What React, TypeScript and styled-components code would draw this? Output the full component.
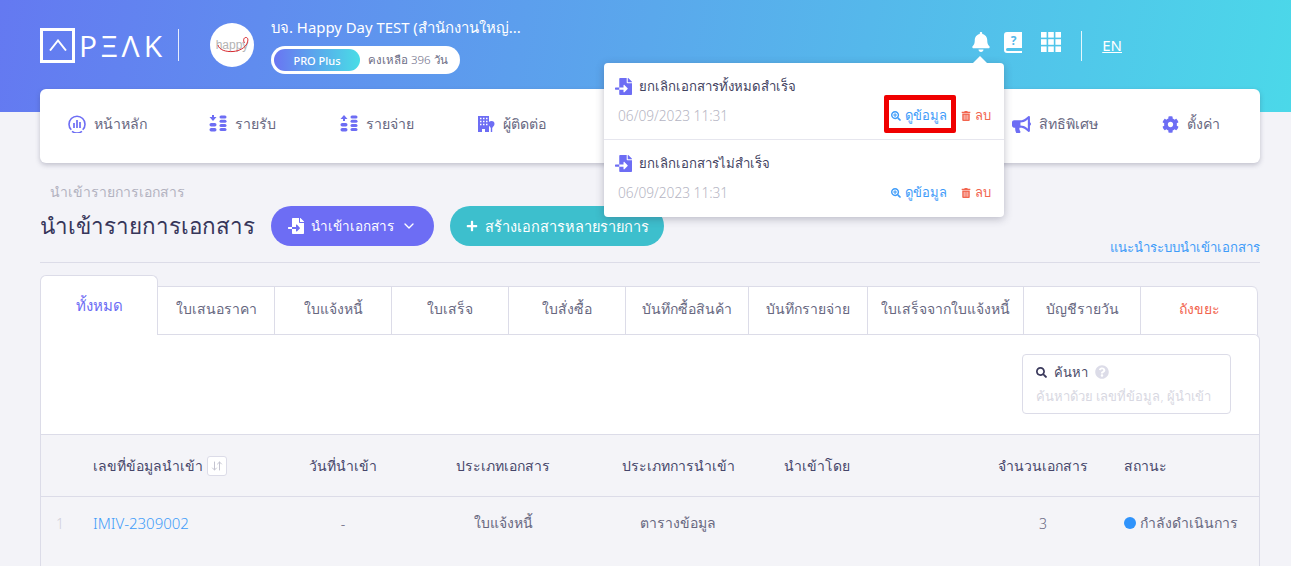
import styled, { createGlobalStyle } from "styled-components";
import {
  FaBell,
  FaBullhorn,
  FaCog,
  FaFileImport,
  FaPlus,
  FaQuestionCircle,
  FaSearch,
  FaSearchPlus,
  FaTrashAlt,
} from "react-icons/fa";
import { LuArrowDownUp, LuChevronDown } from "react-icons/lu";

const GlobalStyle = createGlobalStyle`
  html, body {
    margin: 0;
    padding: 0;
    background: #f3f3f8;
    font-family: "Noto Sans", "Open Sans", sans-serif;
    font-weight: 300;
    color: #3b3a5c;
  }
  * { box-sizing: border-box; }
`;

const purple = "#6d6df4";
const blue = "#3f9cf9";
const red = "#f2654f";
const line = "#dcdce8";

const tabs = [
  { label: "ใบเสนอราคา", width: 117 },
  { label: "ใบแจ้งหนี้", width: 117 },
  { label: "ใบเสร็จ", width: 117 },
  { label: "ใบสั่งซื้อ", width: 117 },
  { label: "บันทึกซื้อสินค้า", width: 123 },
  { label: "บันทึกรายจ่าย", width: 119 },
  { label: "ใบเสร็จจากใบแจ้งหนี้", width: 156 },
  { label: "บัญชีรายวัน", width: 117 },
];

const notifications = [
  { title: "ยกเลิกเอกสารทั้งหมดสำเร็จ", marked: true },
  { title: "ยกเลิกเอกสารไม่สำเร็จ", marked: false },
];

const CoinsIcon = ({ up }: { up?: boolean }) => (
  <svg width="18" height="18" viewBox="0 0 18 18" fill={purple}>
    <path d={up ? "M4 0l3.5 4H5v2H3V4H.5z" : "M3 0h2v2h2.500L4 6 .5 2H3z"} />
    <rect x="0.5" y="8" width="7" height="3.500" rx="1.700" />
    <rect x="0.5" y="13" width="7" height="3.500" rx="1.700" />
    <rect x="10.500" y="0.500" width="7" height="3" rx="1.500" />
    <rect x="10.500" y="4.700" width="7" height="3" rx="1.500" />
    <rect x="10.500" y="8.900" width="7" height="3" rx="1.500" />
    <rect x="10.500" y="13.100" width="7" height="3" rx="1.500" />
  </svg>
);

const DashboardIcon = () => (
  <svg width="18" height="18" viewBox="0 0 18 18" fill="none" stroke={purple}>
    <path d="M3.300 14.800A8 8 0 1 1 14.700 14.800" strokeWidth="1.600" />
    <path d="M4 16.300a8.600 8.600 0 0 0 10 0" strokeWidth="1.600" />
    <path d="M6 8v5M9 5v8M12 7v6" strokeWidth="1.700" />
  </svg>
);

const ContactIcon = () => (
  <svg width="18" height="18" viewBox="0 0 18 18" fill={purple}>
    <path d="M1 1h11v16H8v-3H5v3H1z" />
    <path
      d="M3 3.500h1.500M6 3.500h1.500M9 3.500h1.500M3 6.500h1.500M6 6.500h1.500M9 6.500h1.500M3 9.500h1.500M6 9.500h1.500M9 9.500h1.500"
      stroke="#fff"
      strokeWidth="1.400"
    />
    <path d="M14.500 6a3 3 0 0 1 3 3c0 1.800-1.900 3-2.300 4v4h-1.400v-4c-.4-1-2.300-2.200-2.300-4a3 3 0 0 1 3-3z" />
  </svg>
);

const GuideIcon = () => (
  <svg width="18" height="21" viewBox="0 0 18 21" fill="#fff">
    <path d="M3 0h15v16H3.500a1.500 1.500 0 0 0 0 3H18v2H3a3 3 0 0 1-3-3V3a3 3 0 0 1 3-3z" />
    <text
      x="9.500"
      y="12.500"
      fontSize="12"
      fontWeight="700"
      fontFamily="Noto Sans, sans-serif"
      textAnchor="middle"
      fill="#55b8ea"
    >
      ?
    </text>
  </svg>
);

const AppsIcon = () => (
  <svg width="20" height="20" viewBox="0 0 20 20" fill="#fff">
    {[0, 7.2, 14.4].map((y) =>
      [0, 7.2, 14.4].map((x) => <rect key={`${x}-${y}`} x={x} y={y} width="5.600" height="5.600" />)
    )}
  </svg>
);

const HeartSwoosh = () => (
  <svg width="34" height="20" viewBox="0 0 34 20" fill="none">
    <path d="M2 10c1 5 8 7 15 6.500 7-.5 12-4 14-8 1.500-3.500 1-6-1-6-2.500 0-3 3-1.500 5.500" stroke="#d8282f" strokeWidth="1" />
  </svg>
);

export default function App() {
  return (
    <Page>
      <GlobalStyle />
      <Header>
        <TopBar>
          <Logo>
            <LogoBox>
              <svg width="18" height="12" viewBox="0 0 18 12" fill="none" stroke="#fff" strokeWidth="2">
                <path d="M1 11.500 9 1.500l8 10" />
              </svg>
            </LogoBox>
            <LogoWord>PΞΛK</LogoWord>
          </Logo>
          <Avatar>
            <AvatarText>happy</AvatarText>
            <HeartSwoosh />
          </Avatar>
          <Company>
            <CompanyName>บจ. Happy Day TEST (สำนักงานใหญ่...</CompanyName>
            <PlanPill>
              <PlanBadge>PRO Plus</PlanBadge>
              <PlanLeft>คงเหลือ 396 วัน</PlanLeft>
            </PlanPill>
          </Company>
          <HeaderTools>
            <FaBell size={20} color="#fff" />
            <GuideIcon />
            <AppsIcon />
            <ToolDivider />
            <LangLink>EN</LangLink>
          </HeaderTools>
        </TopBar>
      </Header>

      <NavCard>
        <NavItem $width={141}>
          <DashboardIcon />
          หน้าหลัก
        </NavItem>
        <NavItem $width={131}>
          <CoinsIcon />
          รายรับ
        </NavItem>
        <NavItem $width={137}>
          <CoinsIcon up />
          รายจ่าย
        </NavItem>
        <NavItem $width={535}>
          <ContactIcon />
          ผู้ติดต่อ
        </NavItem>
        <NavItem $width={150}>
          <FaBullhorn size={19} color={purple} />
          สิทธิพิเศษ
        </NavItem>
        <NavItem $width={98}>
          <FaCog size={17} color={purple} />
          ตั้งค่า
        </NavItem>
      </NavCard>

      <Content>
        <Breadcrumb>นำเข้ารายการเอกสาร</Breadcrumb>
        <TitleRow>
          <Title>นำเข้ารายการเอกสาร</Title>
          <PillButton $color={purple} $width={163} $size={13.5}>
            <FaFileImport size={16} />
            นำเข้าเอกสาร
            <LuChevronDown size={16} />
          </PillButton>
          <PillButton $color="#3dbfcd" $width={214} $size={14.5}>
            <FaPlus size={12} />
            สร้างเอกสารหลายรายการ
          </PillButton>
          <GuideLink>แนะนำระบบนำเข้าเอกสาร</GuideLink>
        </TitleRow>

        <TabRow>
          <ActiveTab>ทั้งหมด</ActiveTab>
          <TabGroup>
            {tabs.map((tab) => (
              <Tab key={tab.label} $width={tab.width}>
                {tab.label}
              </Tab>
            ))}
            <Tab $width={117} $danger $last>
              ถังขยะ
            </Tab>
          </TabGroup>
        </TabRow>

        <Panel>
          <SearchRow>
            <SearchBox>
              <SearchLabel>
                <FaSearch size={11} color="#3b3a5c" />
                ค้นหา
                <FaQuestionCircle size={14} color="#dcdce8" />
              </SearchLabel>
              <SearchHint>ค้นหาด้วย เลขที่ข้อมูล, ผู้นำเข้า</SearchHint>
            </SearchBox>
          </SearchRow>
          <TableHead>
            <span />
            <HeadCell>
              เลขที่ข้อมูลนำเข้า
              <SortBox>
                <LuArrowDownUp size={12} />
              </SortBox>
            </HeadCell>
            <HeadCell $center>วันที่นำเข้า</HeadCell>
            <HeadCell $center>ประเภทเอกสาร</HeadCell>
            <HeadCell $center>ประเภทการนำเข้า</HeadCell>
            <HeadCell>นำเข้าโดย</HeadCell>
            <HeadCell $center>จำนวนเอกสาร</HeadCell>
            <HeadCell>สถานะ</HeadCell>
          </TableHead>
          <TableRow>
            <RowIndex>1</RowIndex>
            <RowLink>IMIV-2309002</RowLink>
            <RowCell $center>-</RowCell>
            <RowCell $center>ใบแจ้งหนี้</RowCell>
            <RowCell $center>ตารางข้อมูล</RowCell>
            <RowCell />
            <RowCell $center>3</RowCell>
            <RowCell>
              <StatusDot />
              กำลังดำเนินการ
            </RowCell>
          </TableRow>
        </Panel>
      </Content>

      <Popover>
        {notifications.map((item) => (
          <Notice key={item.title}>
            <NoticeTitle>
              <FaFileImport size={17} color={purple} />
              {item.title}
            </NoticeTitle>
            <NoticeMeta>
              <NoticeTime>06/09/2023 11:31</NoticeTime>
              <NoticeAction $color={blue}>
                <FaSearchPlus size={10} />
                ดูข้อมูล
                {item.marked && <RedMark />}
              </NoticeAction>
              <NoticeAction $color={red}>
                <FaTrashAlt size={10} />
                ลบ
              </NoticeAction>
            </NoticeMeta>
          </Notice>
        ))}
      </Popover>
    </Page>
  );
}

const Page = styled.div`
  position: relative;
  width: 1291px;
  height: 566px;
  overflow: hidden;
  background: #f3f3f8;
`;

const Header = styled.header`
  height: 112px;
  padding: 0 40px;
  background: linear-gradient(100deg, #6479f1 0%, #5aa8ec 50%, #4bd8e9 100%);
`;

const TopBar = styled.div`
  display: flex;
  align-items: center;
  height: 90px;
`;

const Logo = styled.div`
  display: flex;
  align-items: center;
  width: 139px;
  height: 32px;
  margin-right: 31px;
  border-right: 1px solid rgba(255, 255, 255, 0.85);
`;

const LogoBox = styled.div`
  display: flex;
  align-items: center;
  justify-content: center;
  flex: none;
  width: 35px;
  height: 35px;
  border: 3px solid #fff;
`;

const LogoWord = styled.span`
  margin-left: 4px;
  font-family: "Open Sans", sans-serif;
  font-size: 30px;
  font-weight: 500;
  letter-spacing: 4px;
  color: #fff;
`;

const Avatar = styled.div`
  position: relative;
  display: flex;
  align-items: center;
  justify-content: center;
  flex: none;
  width: 44px;
  height: 44px;
  border-radius: 50%;
  background: #fff;
  margin-right: 17px;

  svg {
    position: absolute;
    left: 6px;
    top: 12px;
  }
`;

const AvatarText = styled.span`
  font-family: "Liberation Sans", sans-serif;
  font-size: 12px;
  color: #b4b4b4;
`;

const Company = styled.div`
  display: flex;
  flex-direction: column;
  gap: 8px;
`;

const CompanyName = styled.div`
  font-size: 14.9px;
  font-weight: 400;
  line-height: 22px;
  color: #fff;
`;

const PlanPill = styled.div`
  display: flex;
  align-items: center;
  width: 189px;
  height: 28px;
  padding: 0 3px;
  border-radius: 14px;
  background: #fff;
`;

const PlanBadge = styled.span`
  display: flex;
  align-items: center;
  justify-content: center;
  width: 86px;
  height: 22px;
  border-radius: 11px;
  font-size: 11px;
  font-weight: 500;
  color: #fff;
  background: linear-gradient(90deg, #6a75f2, #49dde6);
`;

const PlanLeft = styled.span`
  margin-left: 8px;
  font-size: 11.5px;
  color: #6c6c85;
`;

const HeaderTools = styled.div`
  display: flex;
  align-items: center;
  gap: 16px;
  margin-left: auto;
  margin-right: 129px;
  margin-top: -6px;

  svg:nth-child(2) {
    margin: 0 3px 0 -3px;
  }
`;

const ToolDivider = styled.div`
  width: 1px;
  height: 30px;
  margin: 7px 4px 0;
  background: rgba(255, 255, 255, 0.85);
`;

const LangLink = styled.span`
  margin-top: 5px;
  font-size: 15px;
  font-weight: 400;
  color: #fff;
  text-decoration: underline;
`;

const NavCard = styled.nav`
  position: relative;
  display: flex;
  align-items: center;
  width: 1220px;
  height: 74px;
  margin: -23px 0 0 40px;
  padding-left: 28px;
  padding-bottom: 4px;
  border-radius: 6px;
  background: #fff;
  box-shadow: 0 2px 5px rgba(60, 60, 90, 0.28);
`;

const NavItem = styled.div<{ $width: number }>`
  display: flex;
  align-items: center;
  gap: 8px;
  flex: none;
  width: ${(p) => p.$width}px;
  font-size: 14.2px;
  color: #67677f;
`;

const Content = styled.main`
  padding: 0 31px 0 40px;
`;

const Breadcrumb = styled.div`
  margin: 19px 0 0 10px;
  font-size: 14px;
  line-height: 20px;
  color: #b2b2c0;
`;

const TitleRow = styled.div`
  display: flex;
  align-items: flex-start;
  gap: 16px;
  height: 57px;
  margin-top: 4px;
  border-bottom: 1px solid ${line};
`;

const Title = styled.h1`
  width: 215px;
  margin: 0;
  white-space: nowrap;
  font-size: 22.4px;
  font-weight: 500;
  line-height: 40px;
  color: #37365a;
`;

const PillButton = styled.button<{ $color: string; $width: number; $size: number }>`
  display: flex;
  align-items: center;
  justify-content: center;
  gap: 7px;
  flex: none;
  width: ${(p) => p.$width}px;
  height: 40px;
  border: 0;
  border-radius: 20px;
  font: inherit;
  font-size: ${(p) => p.$size}px;
  font-weight: 400;
  color: #fff;
  background: ${(p) => p.$color};
`;

const GuideLink = styled.a`
  margin: 29px 0 0 auto;
  font-size: 13.2px;
  line-height: 24px;
  color: ${blue};
`;

const TabRow = styled.div`
  display: flex;
  align-items: flex-end;
  height: 72px;
  margin-bottom: -1px;
`;

const ActiveTab = styled.div`
  position: relative;
  z-index: 1;
  width: 118px;
  height: 60px;
  padding-top: 18px;
  text-align: center;
  font-size: 15px;
  font-weight: 500;
  color: ${purple};
  background: #fff;
  border: 1px solid ${line};
  border-bottom: 0;
  border-radius: 6px 6px 0 0;
`;

const TabGroup = styled.div`
  display: flex;
  height: 49px;
  background: #fff;
  border-top: 1px solid ${line};
  border-radius: 0 6px 0 0;
`;

const Tab = styled.div<{ $width: number; $danger?: boolean; $last?: boolean }>`
  display: flex;
  align-items: center;
  justify-content: center;
  width: ${(p) => p.$width}px;
  padding-bottom: 4px;
  font-size: 14px;
  color: ${(p) => (p.$danger ? red : "#67677f")};
  border-right: 1px solid ${line};
  border-radius: ${(p) => (p.$last ? "0 6px 0 0" : "0")};
`;

const Panel = styled.section`
  position: relative;
  width: 1220px;
  border: 1px solid ${line};
  border-bottom: 0;
  border-radius: 0 6px 0 0;
  background: #fff;
`;

const SearchRow = styled.div`
  display: flex;
  justify-content: flex-end;
  height: 100px;
  padding: 19px 28px 0 0;
  border-bottom: 1px solid ${line};
`;

const SearchBox = styled.div`
  width: 209px;
  height: 60px;
  padding: 7px 13px;
  border: 1px solid ${line};
  border-radius: 4px;
`;

const SearchLabel = styled.div`
  display: flex;
  align-items: center;
  gap: 7px;
  font-size: 13px;
  font-weight: 400;
  line-height: 20px;
  color: #4a4a68;
`;

const SearchHint = styled.div`
  margin-top: 5px;
  font-size: 13px;
  line-height: 18px;
  color: #d8d8e2;
`;

const columns = "52px 180px 140px 180px 170px 207px 146px 1fr";

const TableHead = styled.div`
  display: grid;
  grid-template-columns: ${columns};
  align-items: center;
  height: 62px;
  background: #f4f4f8;
  border-bottom: 1px solid ${line};
`;

const HeadCell = styled.div<{ $center?: boolean }>`
  display: flex;
  align-items: center;
  gap: 4px;
  justify-content: ${(p) => (p.$center ? "center" : "flex-start")};
  font-size: 14px;
  font-weight: 400;
  color: #46466a;

  &:nth-child(6) {
    padding-left: 21px;
  }
  &:nth-child(8) {
    padding-left: 8px;
  }
`;

const SortBox = styled.span`
  display: flex;
  align-items: center;
  justify-content: center;
  width: 20px;
  height: 20px;
  border: 1px solid ${line};
  border-radius: 3px;
  color: #c4c4d0;
  background: #fff;
`;

const TableRow = styled(TableHead)`
  height: 70px;
  padding-bottom: 18px;
  border-bottom: 0;
`;

const RowIndex = styled.div`
  padding-left: 15px;
  font-size: 14px;
  color: #cfcfd9;
`;

const RowLink = styled.a`
  font-size: 15px;
  color: ${blue};
`;

const RowCell = styled.div<{ $center?: boolean }>`
  text-align: ${(p) => (p.$center ? "center" : "left")};
  font-size: 14px;
  color: #67677f;

  &:last-child {
    padding-left: 8px;
    white-space: nowrap;
  }
`;

const StatusDot = styled.span`
  display: inline-block;
  width: 12px;
  height: 12px;
  margin-right: 4px;
  border-radius: 50%;
  vertical-align: -1px;
  background: #2f93fb;
`;

const Popover = styled.aside`
  position: absolute;
  z-index: 2;
  left: 604px;
  top: 63px;
  width: 400px;
  border-radius: 4px;
  background: #fff;
  box-shadow: 0 2px 8px rgba(50, 50, 80, 0.3);

  &::before {
    content: "";
    position: absolute;
    left: 369px;
    top: -7px;
    border: 7px solid transparent;
    border-top: 0;
    border-bottom-color: #fff;
  }
`;

const Notice = styled.div`
  height: 76px;
  padding: 12px 13px 0 11px;

  & + & {
    height: 78px;
    border-top: 1px solid #e6e6ee;
  }
`;

const NoticeTitle = styled.div`
  display: flex;
  align-items: center;
  gap: 7px;
  font-size: 13.2px;
  font-weight: 400;
  line-height: 22px;
  color: #43435f;
`;

const NoticeMeta = styled.div`
  display: flex;
  align-items: center;
  gap: 14px;
  margin-top: 8px;
`;

const NoticeTime = styled.span`
  margin-right: auto;
  margin-left: 3px;
  font-size: 13.7px;
  color: #b5b5c3;
`;

const NoticeAction = styled.a<{ $color: string }>`
  position: relative;
  display: flex;
  align-items: center;
  gap: 4px;
  font-size: 13px;
  color: ${(p) => p.$color};
`;

const RedMark = styled.span`
  position: absolute;
  left: -7px;
  right: -9px;
  top: -10px;
  bottom: -7px;
  border: 5px solid #f00000;
  border-radius: 2px;
`;
